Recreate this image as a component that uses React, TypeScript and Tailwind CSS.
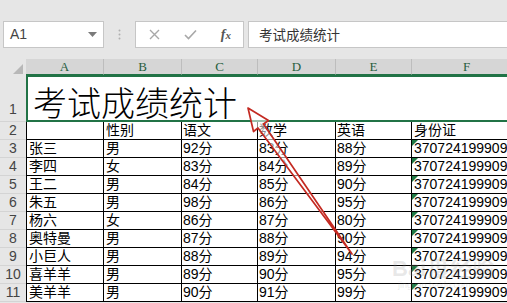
import React from 'react';

const rows: string[][] = [
  ['3', '张三', '男', '92分', '83分', '88分'],
  ['4', '李四', '女', '83分', '84分', '89分'],
  ['5', '王二', '男', '84分', '85分', '90分'],
  ['6', '朱五', '男', '98分', '86分', '95分'],
  ['7', '杨六', '女', '86分', '87分', '80分'],
  ['8', '奥特曼', '男', '87分', '88分', '90分'],
  ['9', '小巨人', '男', '88分', '89分', '94分'],
  ['10', '喜羊羊', '男', '89分', '90分', '95分'],
  ['11', '美羊羊', '男', '90分', '91分', '99分'],
];

const cellFont = { fontFamily: '"Liberation Sans", "Noto Sans CJK SC", sans-serif' };

const RowHead: React.FC<{ n: string }> = ({ n }) => (
  <div className="w-[26px] shrink-0 bg-[#e6e6e6] border-b border-[#d4d4d4] flex items-center justify-center text-[14px] text-[#444]">
    {n}
  </div>
);

const TextFlag = () => (
  <svg className="absolute left-0 top-0" width="6" height="6" viewBox="0 0 6 6">
    <polygon points="0,0 6,0 0,6" fill="#1f7a45" />
  </svg>
);

const DataRow: React.FC<{ cells: string[]; header?: boolean }> = ({ cells, header }) => (
  <div className="flex h-[18px] text-[14px] leading-[17px] text-black">
    <RowHead n={cells[0]} />
    <div className="w-[78px] shrink-0 border-l border-r border-b border-black pl-[2px] whitespace-nowrap">{cells[1]}</div>
    <div className="w-[78px] shrink-0 border-r border-b border-black pl-[2px] whitespace-nowrap">{cells[2]}</div>
    <div className="w-[76px] shrink-0 border-r border-b border-black pl-[1px] whitespace-nowrap">{cells[3]}</div>
    <div className="w-[78px] shrink-0 border-r border-b border-black pl-[1px] whitespace-nowrap">{cells[4]}</div>
    <div className="w-[76px] shrink-0 border-r border-b border-black pl-[1px] whitespace-nowrap">{cells[5]}</div>
    <div className="relative w-[110px] shrink-0 border-b border-black pl-[2px] whitespace-nowrap overflow-hidden">
      {header ? '身份证' : (
        <>
          <TextFlag />
          370724199909091234
        </>
      )}
    </div>
  </div>
);

export default function App() {
  return (
    <div className="relative w-[507px] h-[303px] overflow-hidden bg-[#e6e6e6]" style={cellFont}>
      {/* formula bar */}
      <div className="h-[21px]" />
      <div className="flex h-[27px] items-stretch">
        <div className="ml-[3px] w-[101px] bg-white border border-[#c6c6c6] flex items-center pl-[6px] pr-[6px] justify-between">
          <span className="text-[14px] text-[#444]">A1</span>
          <svg width="9" height="5" viewBox="0 0 9 5">
            <polygon points="0,0 9,0 4.5,5" fill="#7a7a7a" />
          </svg>
        </div>
        <div className="w-[31px] flex items-center justify-center">
          <svg width="3" height="11" viewBox="0 0 3 11">
            <circle cx="1.5" cy="1.5" r="1" fill="#b0b0b0" />
            <circle cx="1.5" cy="5.5" r="1" fill="#b0b0b0" />
            <circle cx="1.5" cy="9.5" r="1" fill="#b0b0b0" />
          </svg>
        </div>
        <div className="w-[109px] bg-white border border-[#c6c6c6] flex items-center justify-between pl-[13px] pr-[12px]">
          <svg width="11" height="11" viewBox="0 0 11 11">
            <path d="M1 1 L10 10 M10 1 L1 10" stroke="#a8a8a8" strokeWidth="1.4" />
          </svg>
          <svg width="13" height="11" viewBox="0 0 13 11">
            <path d="M1 6 L4.5 9.5 L12 1.5" stroke="#a8a8a8" strokeWidth="1.6" fill="none" />
          </svg>
          <span
            className="text-[14px] italic text-[#555] font-bold"
            style={{ fontFamily: '"Liberation Serif", serif' }}
          >
            f<span className="text-[11px]">x</span>
          </span>
        </div>
        <div className="ml-[4px] flex-1 bg-white border border-[#c6c6c6] border-r-0 flex items-center pl-[10px]">
          <span className="text-[13.5px] text-[#333]" style={{ fontFamily: '"Noto Sans CJK SC", sans-serif' }}>
            考试成绩统计
          </span>
        </div>
      </div>
      <div className="h-[11px]" />

      {/* column headers */}
      <div className="flex h-[16px] bg-[#e6e6e6]">
        <div className="w-[26px] shrink-0 relative">
          <svg className="absolute right-[3px] bottom-[1px]" width="10" height="10" viewBox="0 0 10 10">
            <polygon points="10,0 10,10 0,10" fill="#b8b8b8" />
          </svg>
        </div>
        {[
          ['A', 'w-[78px]'],
          ['B', 'w-[78px]'],
          ['C', 'w-[76px]'],
          ['D', 'w-[78px]'],
          ['E', 'w-[76px]'],
          ['F', 'w-[110px]'],
        ].map(([l, w]) => (
          <div
            key={l}
            className={`${w} shrink-0 bg-[#d6d6d6] border-r border-[#bdbdbd] border-b border-b-[#217346] flex items-center justify-center text-[13px] text-[#275d3e]`}
            style={{ fontFamily: '"Liberation Serif", serif' }}
          >
            {l}
          </div>
        ))}
      </div>

      {/* row 1 merged title */}
      <div className="flex h-[47px] bg-white">
        <div className="w-[26px] shrink-0 bg-[#e6e6e6] border-b border-[#d4d4d4] flex items-end justify-center pb-[1px] text-[14px] text-[#444]">
          1
        </div>
        <div className="w-[500px] shrink-0 border-2 border-[#217346] flex items-end pl-[5px] pb-[1px]">
          <span
            className="text-[34px] leading-none font-light text-black"
            style={{ fontFamily: '"Noto Sans CJK SC", sans-serif' }}
          >
            考试成绩统计
          </span>
        </div>
      </div>

      {/* table */}
      <div className="bg-white">
        <DataRow cells={['2', '', '性别', '语文', '数学', '英语']} header />
        {rows.map((r) => (
          <DataRow key={r[0]} cells={r} />
        ))}
      </div>

      {/* annotation arrow */}
      <svg className="absolute left-0 top-0 pointer-events-none" width="507" height="303" viewBox="0 0 507 303">
        <polygon
          points="248,108 268.5,120.5 263.5,124 352,254 258,128 253.5,131.5"
          fill="rgba(255,255,255,0.55)"
          stroke="#c42a22"
          strokeWidth="1.7"
          strokeLinejoin="round"
        />
      </svg>

      {/* watermark */}
      <div className="absolute left-[392px] top-[258px] pointer-events-none leading-none text-[rgba(150,150,150,0.22)]">
        <div className="text-[22px] font-bold" style={{ fontFamily: '"Liberation Sans", "Noto Sans CJK SC", sans-serif' }}>
          Bai<span className="ml-[2px]">度</span>经验
        </div>
        <div className="text-[9px] mt-[1px] pl-[6px]">jingyan.baidu.com</div>
      </div>
    </div>
  );
}
